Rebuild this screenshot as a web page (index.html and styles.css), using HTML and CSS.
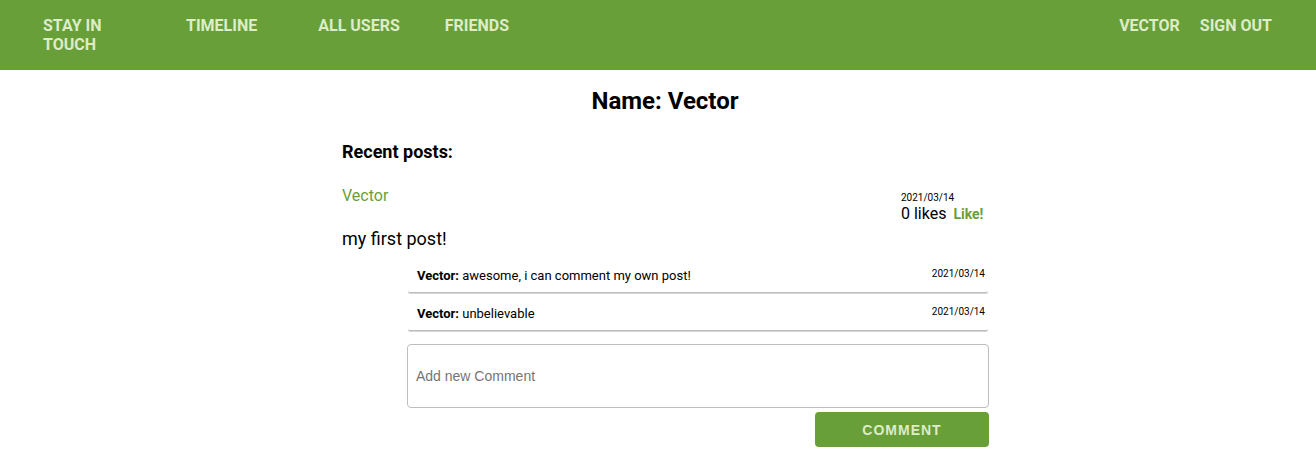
FILE: index.html
```html
<!DOCTYPE html>
<html>
<head>
<meta charset="utf-8">
<link rel="stylesheet" href="styles.css">
</head>
<body>
<nav class="topbar">
  <div class="nav-left">
    <a class="nav-link brand">Stay in touch</a>
    <a class="nav-link timeline">Timeline</a>
    <a class="nav-link users">All users</a>
    <a class="nav-link">Friends</a>
  </div>
  <div class="nav-right">
    <a class="nav-link">Vector</a>
    <a class="nav-link">Sign out</a>
  </div>
</nav>
<main class="main">
  <h1 class="title">Name: Vector</h1>
  <section class="posts">
    <h2 class="posts-title">Recent posts:</h2>
    <article class="post">
      <div class="post-head">
        <a class="post-author">Vector</a>
        <div class="post-meta">
          <div class="post-date">2021/03/14</div>
          <div class="post-likes">0 likes <a class="like">Like!</a></div>
        </div>
      </div>
      <p class="post-body">my first post!</p>
      <div class="comments">
        <div class="comment">
          <span class="comment-text"><b>Vector:</b> awesome, i can comment my own post!</span>
          <span class="comment-date">2021/03/14</span>
        </div>
        <div class="comment">
          <span class="comment-text"><b>Vector:</b> unbelievable</span>
          <span class="comment-date">2021/03/14</span>
        </div>
        <form class="comment-form">
          <input class="comment-input" type="text" placeholder="Add new Comment">
          <button class="comment-btn" type="button">Comment</button>
        </form>
      </div>
    </article>
  </section>
</main>
</body>
</html>
```
FILE: styles.css
```css
* { box-sizing: border-box; }
body {
  margin: 0;
  font-family: Roboto, "Liberation Sans", sans-serif;
  color: #000;
  background: #fff;
}
.topbar {
  height: 70px;
  background: #689f38;
  display: flex;
  justify-content: space-between;
  align-items: flex-start;
  padding: 16px 44px 0 43px;
}
.nav-left, .nav-right {
  display: flex;
  align-items: flex-start;
}
.nav-right { gap: 20px; }
.nav-link {
  color: #dcedc8;
  font-weight: 700;
  font-size: 16px;
  line-height: 19px;
  text-transform: uppercase;
  text-decoration: none;
}
.brand { width: 143px; padding-right: 60px; }
.timeline { margin-right: 61px; }
.users { margin-right: 45px; }

.main {
  width: 646px;
  margin: 0 auto;
  position: relative;
  left: 7px;
}
.title {
  margin: 17px 0 0;
  text-align: center;
  font-size: 24px;
  line-height: 28px;
  font-weight: 700;
}
.posts-title {
  margin: 26px 0 0;
  font-size: 18px;
  line-height: 21px;
  font-weight: 700;
}
.post { margin-top: 24px; }
.post-head {
  display: flex;
  justify-content: space-between;
  align-items: flex-start;
}
.post-author {
  color: #689f38;
  font-size: 16px;
  line-height: 19px;
}
.post-meta {
  width: 88px;
  padding-top: 5px;
}
.post-date {
  font-size: 10px;
  line-height: 13px;
  padding-left: 1px;
}
.post-likes {
  font-size: 16px;
  line-height: 19px;
  padding-left: 1px;
}
.like {
  color: #689f38;
  font-weight: 700;
  font-size: 14px;
  margin-left: 3px;
}
.post-body {
  margin: 4px 0 0;
  font-size: 18px;
  line-height: 21px;
}
.comments {
  margin: 6px -1px 0 65px;
}
.comment {
  display: flex;
  justify-content: space-between;
  align-items: flex-start;
  margin: 0 1px;
  height: 38px;
  padding: 13px 3px 0 9px;
  border-bottom: 1px solid #bdbdbd;
  border-radius: 0 0 2px 2px;
  box-shadow: 0 1px 0 #d6d6d6;
}
.comment-text {
  font-size: 13px;
  line-height: 15px;
}
.comment-date {
  font-size: 10px;
  line-height: 12px;
}
.comment-form {
  margin: 13px 0 0;
  display: flex;
  flex-direction: column;
  align-items: flex-end;
}
.comment-input {
  width: 100%;
  height: 64px;
  border: 1px solid #bdbdbd;
  border-radius: 4px;
  padding: 0 8px;
  font-family: "Liberation Sans", Arial, sans-serif;
  font-size: 14px;
  outline: none;
}
.comment-input::placeholder { color: #757575; }
.comment-btn {
  margin-top: 4px;
  width: 174px;
  height: 35px;
  border: none;
  border-radius: 4px;
  background: #689f38;
  color: #dcedc8;
  font-family: "Liberation Sans", Arial, sans-serif;
  font-weight: 700;
  font-size: 14px;
  letter-spacing: 1px;
  text-transform: uppercase;
}
```
